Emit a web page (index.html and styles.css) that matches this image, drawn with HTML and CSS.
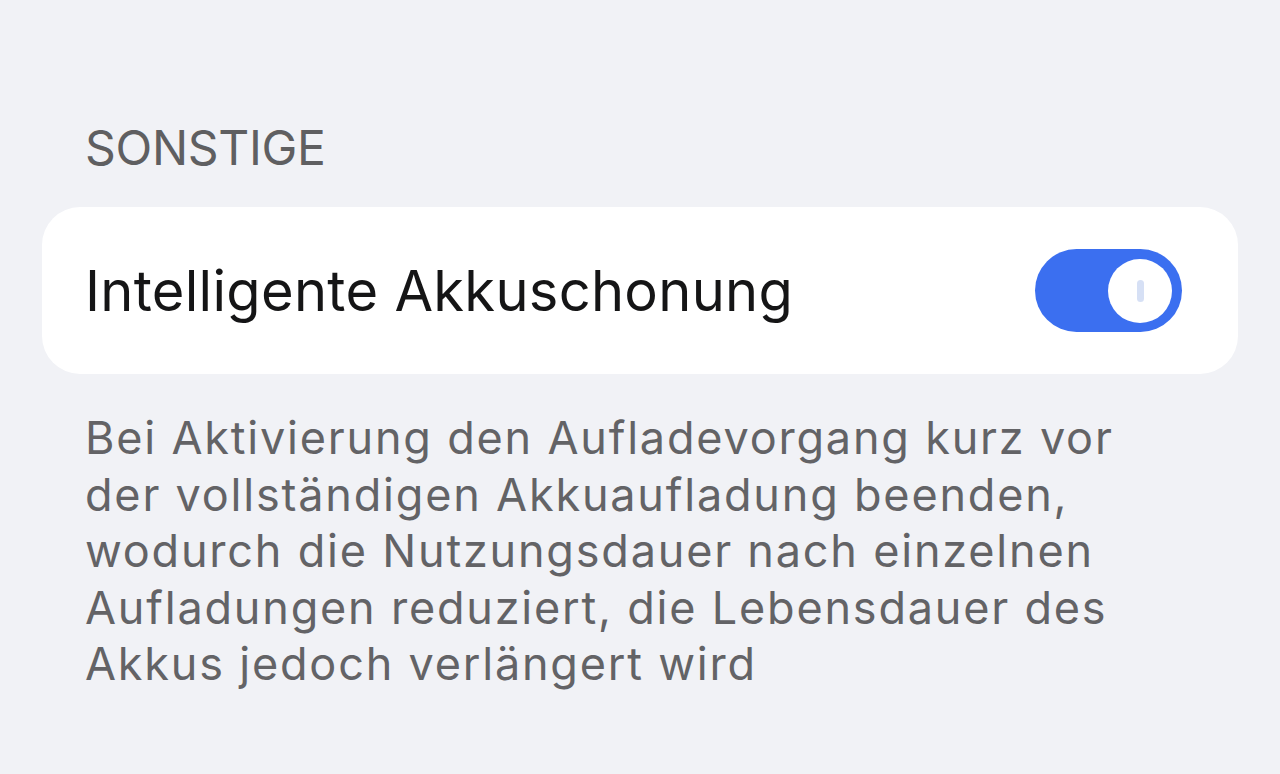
FILE: index.html
```html
<!DOCTYPE html>
<html lang="de">
<head>
<meta charset="utf-8">
<link rel="stylesheet" href="styles.css">
</head>
<body>
<main class="page">
  <h2 class="section-title">SONSTIGE</h2>
  <div class="card">
    <span class="card-label">Intelligente Akkuschonung</span>
    <div class="toggle on"><span class="knob"><span class="knob-mark"></span></span></div>
  </div>
  <p class="desc">Bei Aktivierung den Aufladevorgang kurz vor<br>der vollständigen Akkuaufladung beenden,<br>wodurch die Nutzungsdauer nach einzelnen<br>Aufladungen reduziert, die Lebensdauer des<br>Akkus jedoch verlängert wird</p>
</main>
</body>
</html>
```
FILE: styles.css
```css
html, body {
  margin: 0;
  padding: 0;
  background: #f1f2f6;
  height: 100%;
}
body {
  font-family: "Inter", "Noto Sans", sans-serif;
  -webkit-font-smoothing: antialiased;
}
.page {
  padding: 118px 42px 0 42px;
}
.section-title {
  margin: 0 0 0 43px;
  font-size: 48px;
  font-weight: 400;
  color: #5f5f61;
  line-height: 60px;
  letter-spacing: -0.3px;
}
.card {
  margin-top: 29px;
  height: 167px;
  background: #ffffff;
  border-radius: 38px;
  display: flex;
  align-items: center;
  justify-content: space-between;
  padding: 0 56px 0 43px;
  box-sizing: border-box;
}
.card-label {
  font-size: 56px;
  color: #151516;
  font-weight: 400;
  letter-spacing: 0.3px;
}
.toggle {
  width: 147px;
  height: 83px;
  border-radius: 42px;
  background: #3b6ff0;
  display: flex;
  align-items: center;
  justify-content: flex-end;
  padding: 0 10px;
  box-sizing: border-box;
}
.knob {
  width: 64px;
  height: 64px;
  border-radius: 50%;
  background: #ffffff;
  display: flex;
  align-items: center;
  justify-content: center;
}
.knob-mark {
  width: 7px;
  height: 22px;
  border-radius: 4px;
  background: #d6e0f5;
}
.desc {
  margin: 36px 0 0 43px;
  font-size: 45px;
  line-height: 56.5px;
  color: #636366;
  letter-spacing: 1.8px;
}
```
